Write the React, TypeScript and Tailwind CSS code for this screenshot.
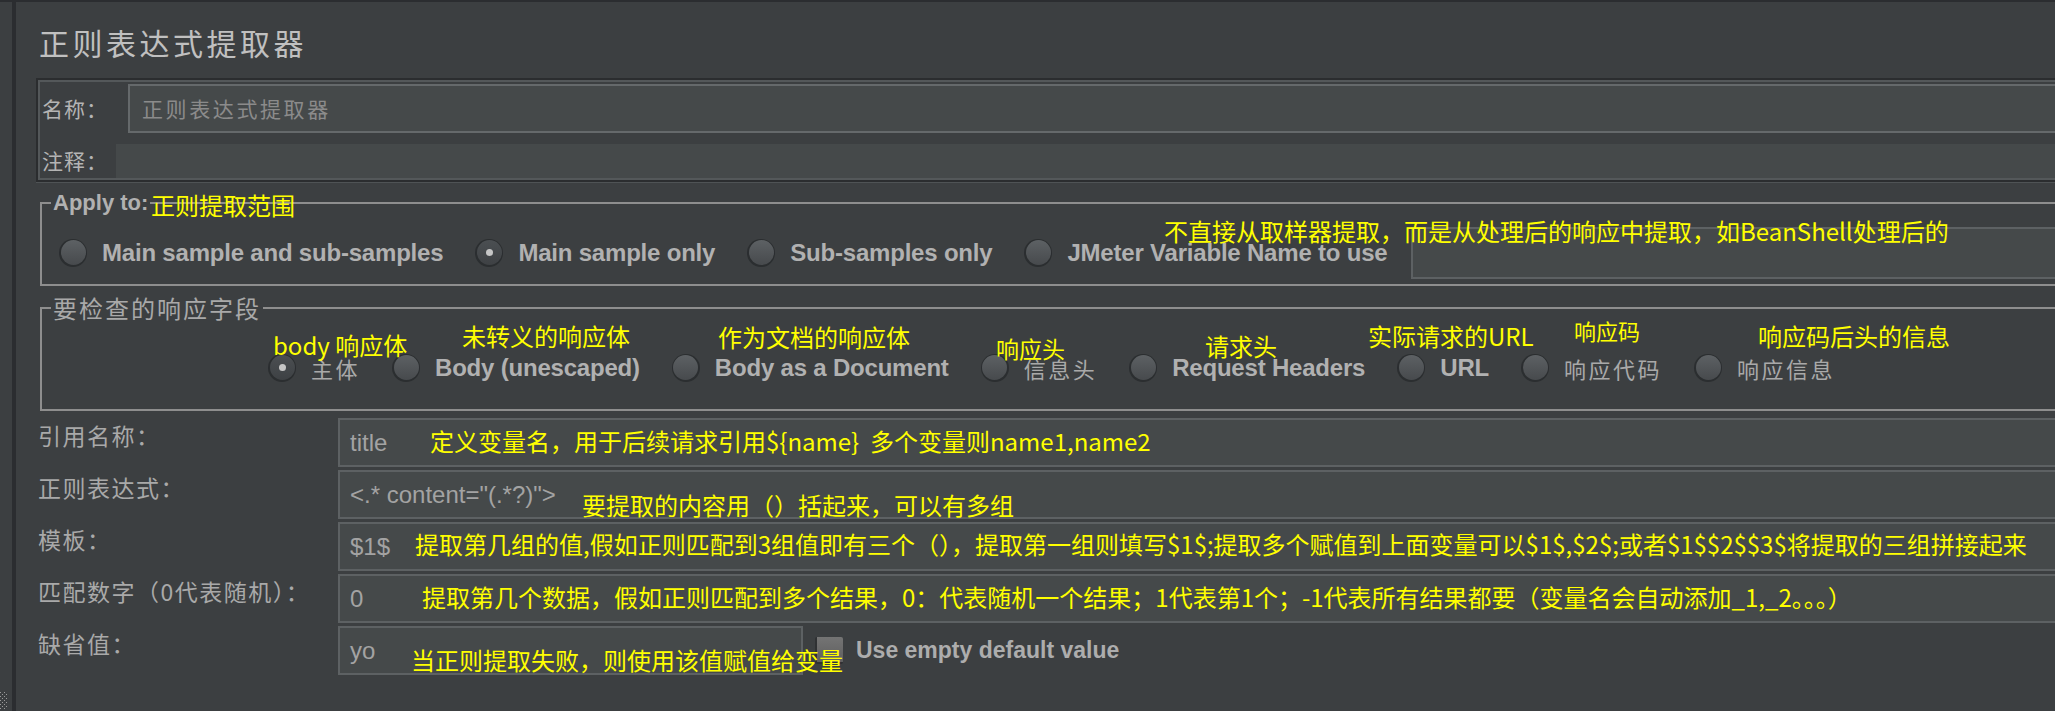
import React from "react";

const CJK = "font-['Noto_Sans_CJK_SC',sans-serif]";
const LATIN = "font-['Liberation_Sans','Noto_Sans_CJK_SC',sans-serif]";

const applyOptions = [
  { label: "Main sample and sub-samples", checked: false },
  { label: "Main sample only", checked: true },
  { label: "Sub-samples only", checked: false },
  { label: "JMeter Variable Name to use", checked: false },
];

const fieldOptions = [
  { label: "主体", checked: true, cjk: true },
  { label: "Body (unescaped)", checked: false, cjk: false },
  { label: "Body as a Document", checked: false, cjk: false },
  { label: "信息头", checked: false, cjk: true },
  { label: "Request Headers", checked: false, cjk: false },
  { label: "URL", checked: false, cjk: false },
  { label: "响应代码", checked: false, cjk: true },
  { label: "响应信息", checked: false, cjk: true },
];

const rows = [
  { label: "引用名称：", value: "title" },
  { label: "正则表达式：", value: '<.* content="(.*?)">' },
  { label: "模板：", value: "$1$" },
  { label: "匹配数字（0代表随机）：", value: "0" },
];

// yellow callouts pasted over the screenshot
const notes = [
  { text: "正则提取范围", cls: "left-[151px] top-[193px] text-[24px]" },
  { text: "不直接从取样器提取，而是从处理后的响应中提取，如BeanShell处理后的", cls: "left-[1164px] top-[219px] text-[24px]" },
  { text: "body 响应体", cls: "left-[273px] top-[333px] text-[24px]" },
  { text: "未转义的响应体", cls: "left-[462px] top-[324px] text-[24px]" },
  { text: "作为文档的响应体", cls: "left-[718px] top-[325px] text-[24px]" },
  { text: "响应头", cls: "left-[996px] top-[336px] text-[23px]" },
  { text: "请求头", cls: "left-[1205px] top-[334px] text-[24px]" },
  { text: "实际请求的URL", cls: "left-[1368px] top-[324px] text-[24px]" },
  { text: "响应码", cls: "left-[1574px] top-[318px] text-[22px]" },
  { text: "响应码后头的信息", cls: "left-[1758px] top-[324px] text-[24px]" },
  { text: "定义变量名，用于后续请求引用${name}  多个变量则name1,name2", cls: "left-[430px] top-[429px] text-[24px]" },
  { text: "要提取的内容用（）括起来，可以有多组", cls: "left-[582px] top-[493px] text-[24px]" },
  { text: "提取第几组的值,假如正则匹配到3组值即有三个（），提取第一组则填写$1$;提取多个赋值到上面变量可以$1$,$2$;或者$1$$2$$3$将提取的三组拼接起来", cls: "left-[415px] top-[532px] text-[24px]" },
  { text: "提取第几个数据，假如正则匹配到多个结果，0：代表随机一个结果；1代表第1个；-1代表所有结果都要（变量名会自动添加_1,_2。。。）", cls: "left-[422px] top-[585px] text-[24px]" },
  { text: "当正则提取失败，则使用该值赋值给变量", cls: "left-[411px] top-[648px] text-[24px]" },
];

function Radio({ checked }: { checked: boolean }) {
  return (
    <span className="flex h-[28px] w-[28px] shrink-0 items-center justify-center rounded-full bg-[#2b2e30]">
      <span
        className={
          checked
            ? "-mt-[1px] flex h-[25px] w-[25px] items-center justify-center rounded-full bg-linear-to-b from-[#4b4f52] to-[#3e4144]"
            : "-mt-[1px] flex h-[25px] w-[25px] items-center justify-center rounded-full bg-linear-to-b from-[#5d6164] to-[#474a4d]"
        }
      >
        {checked && <span className="h-[7px] w-[7px] rounded-full bg-[#c6c6c6]" />}
      </span>
    </span>
  );
}

function Option({ label, checked, cjk }: { label: string; checked: boolean; cjk?: boolean }) {
  return (
    <div className="flex shrink-0 items-center gap-[15px]">
      <Radio checked={checked} />
      {cjk ? (
        <span className={`${CJK} whitespace-nowrap text-[22px] leading-[28px] tracking-[2.5px] text-[#a9a9a9]`}>{label}</span>
      ) : (
        <span className={`${LATIN} whitespace-nowrap text-[24px] font-bold leading-[28px] tracking-[-0.2px] text-[#b1b1b1]`}>
          {label}
        </span>
      )}
    </div>
  );
}

function Grip() {
  const dots = [];
  for (let r = 0; r < 9; r++) {
    for (let c = 0; c < 4; c++) {
      if ((r + c) % 2 === 0) dots.push(<rect key={`${r}-${c}`} x={c * 2} y={r * 2} width="1" height="1" fill="#9a9a9a" />);
    }
  }
  return (
    <svg width="9" height="18" viewBox="0 0 9 18" className="mb-[1px]">
      {dots}
    </svg>
  );
}

export default function App() {
  return (
    <div className="relative flex h-[711px] w-[2055px] flex-col overflow-hidden bg-[#3c3f41]">
      <div className="h-[2px] shrink-0 bg-[#2b2d30]" />
      <div className="flex flex-1">
        <div className="flex w-[12px] flex-col justify-end">
          <Grip />
        </div>
        <div className="w-[4px] bg-[#2b2d30]" />

        <div className="flex min-w-0 flex-1 flex-col pl-[20px]">
          <div className="h-[76px] pl-[3px] pt-[25px]">
            <h1 className={`${CJK} text-[30px] leading-[30px] tracking-[3.5px] text-[#c0c0c0]`}>正则表达式提取器</h1>
          </div>

          {/* name / comment */}
          <div className="border-2 border-r-0 border-[#2b2d2f]">
            <div className="border-2 border-r-0 border-[#54585a] pt-[2px]">
              <div className="flex h-[49px] items-center">
                <span className={`${CJK} w-[88px] pl-[2px] text-[21px] tracking-[1px] text-[#b4b4b4]`}>名称：</span>
                <div className="flex h-[49px] flex-1 items-center border-2 border-r-0 border-[#65696b] bg-[#45494a] pl-[12px]">
                  <span className={`${CJK} text-[21px] tracking-[2.6px] text-[#8b8b8b]`}>正则表达式提取器</span>
                </div>
              </div>
              <div className="mt-[11px] flex h-[34px] items-center">
                <span className={`${CJK} w-[76px] pl-[2px] text-[21px] tracking-[1px] text-[#b4b4b4]`}>注释：</span>
                <div className="h-[34px] flex-1 bg-[#45494a]" />
              </div>
            </div>
          </div>
          <div className="h-[1px] bg-[#4f5355]" />

          {/* Apply to */}
          <fieldset className="ml-[4px] mt-[6px] border-2 border-r-0 border-[#8e8e8e]">
            <legend className={`${LATIN} ml-[9px] px-[2px] text-[22px] font-bold leading-[28px] text-[#b1b1b1]`}>Apply to:</legend>
            <div className="flex items-center pb-[5px] pl-[17px] pt-[10px]">
              <div className="flex items-center gap-[32px]">
                {applyOptions.map((o) => (
                  <Option key={o.label} label={o.label} checked={o.checked} />
                ))}
              </div>
              <div className="ml-[23px] h-[52px] flex-1 border-2 border-r-0 border-[#5d6163] bg-[#45494a]" />
            </div>
          </fieldset>

          {/* field to check */}
          <fieldset className="ml-[4px] mt-[7px] border-2 border-r-0 border-[#8e8e8e]">
            <legend className={`${CJK} ml-[9px] px-[2px] text-[24px] leading-[30px] tracking-[2px] text-[#a9a9a9]`}>要检查的响应字段</legend>
            <div className="flex items-center gap-[32px] pb-[27px] pl-[226px] pt-[31px]">
              {fieldOptions.map((o) => (
                <Option key={o.label} label={o.label} checked={o.checked} cjk={o.cjk} />
              ))}
            </div>
          </fieldset>

          {/* extractor settings */}
          <div className="mt-[7px] flex flex-col gap-[3px]">
            {rows.map((r) => (
              <div key={r.label} className="flex items-start">
                <div className={`${CJK} w-[302px] whitespace-nowrap pl-[2px] pt-[3px] text-[23px] leading-[28px] tracking-[1.5px] text-[#a9a9a9]`}>
                  {r.label}
                </div>
                <div className="flex h-[49px] flex-1 items-center border-2 border-r-0 border-[#5d6163] bg-[#45494a] pl-[10px]">
                  <span className={`${LATIN} whitespace-pre text-[24px] text-[#a3a3a3]`}>{r.value}</span>
                </div>
              </div>
            ))}
            <div className="flex items-start">
              <div className={`${CJK} w-[302px] whitespace-nowrap pl-[2px] pt-[3px] text-[23px] leading-[28px] tracking-[1.5px] text-[#a9a9a9]`}>
                缺省值：
              </div>
              <div className="flex items-center">
                <div className="flex h-[49px] w-[465px] items-center border-2 border-[#5d6163] bg-[#45494a] pl-[10px]">
                  <span className={`${LATIN} text-[24px] text-[#a3a3a3]`}>yo</span>
                </div>
                <span className="ml-[12px] h-[27px] w-[28px] rounded-[2px] border-b-2 border-l-2 border-[#2f3133] bg-linear-to-b from-[#747474] to-[#5f5f5f]" />
                <span className={`${LATIN} ml-[13px] whitespace-nowrap text-[23px] font-bold text-[#adadad]`}>Use empty default value</span>
              </div>
            </div>
          </div>
        </div>
      </div>

      {notes.map((n) => (
        <span
          key={n.text}
          className={`${CJK} ${n.cls} pointer-events-none absolute whitespace-pre leading-[24px] text-[#ffff00]`}
        >
          {n.text}
        </span>
      ))}
    </div>
  );
}
